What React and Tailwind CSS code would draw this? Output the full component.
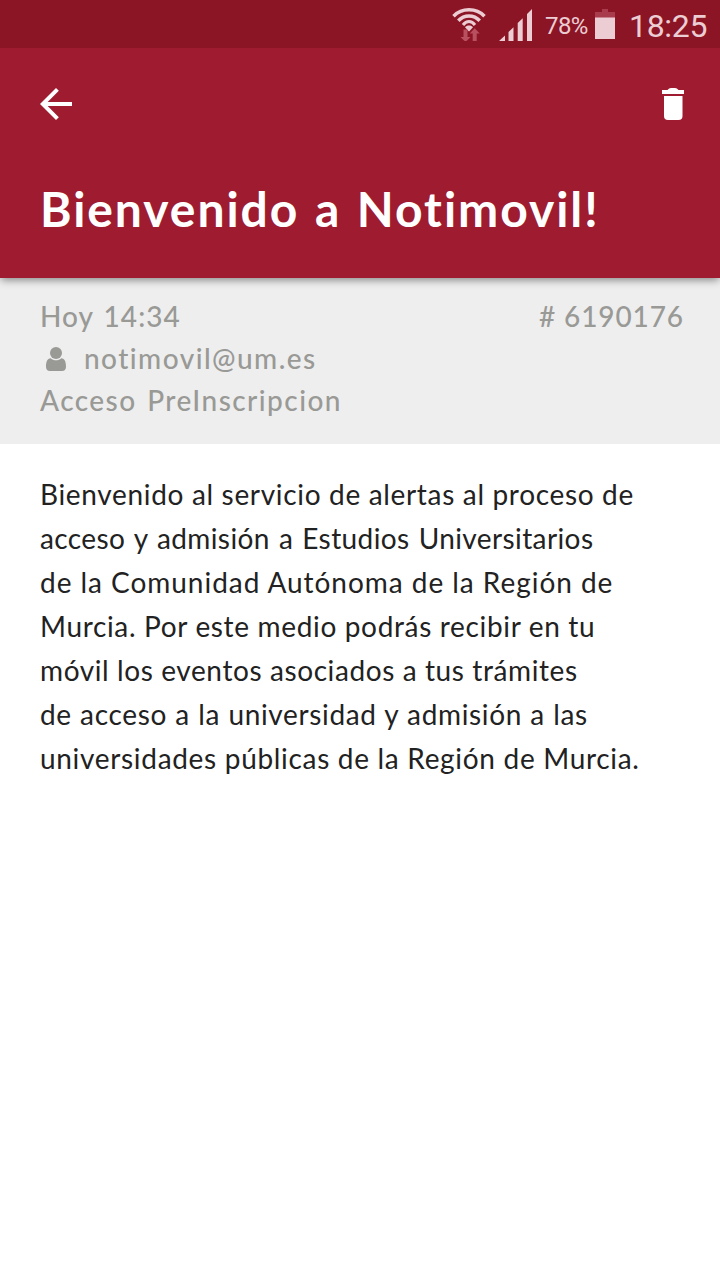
const bodyLines = [
  { text: "Bienvenido al servicio de alertas al proceso de", track: "tracking-[0.67px]" },
  { text: "acceso y admisión a Estudios Universitarios", track: "tracking-[0.4px] [word-spacing:1.5px]" },
  { text: "de la Comunidad Autónoma de la Región de", track: "tracking-[0.96px]" },
  { text: "Murcia. Por este medio podrás recibir en tu", track: "tracking-[0.66px]" },
  { text: "móvil los eventos asociados a tus trámites", track: "tracking-[0.6px]" },
  { text: "de acceso a la universidad y admisión a las", track: "tracking-[0.66px] [word-spacing:0.5px]" },
  { text: "universidades públicas de la Región de Murcia.", track: "tracking-[0.69px]" },
];

function WifiIcon() {
  return (
    <svg className="h-9 w-9 shrink-0" viewBox="0 0 36 36" fill="none">
      <g stroke="#eccdd3" strokeWidth="3.5">
        <path d="M2.500 11.200C10.800 2.700 25.200 2.700 33.500 11.200" />
        <path d="M7.300 15.700C13.200 9.300 22.800 9.300 28.700 15.700" />
        <path d="M12 20C15.500 15.200 20.500 15.200 24 20" strokeWidth="3" />
      </g>
      <path d="M18 20.600c1.700 0 3 .7 4 1.700L18 26.500l-4-4.200c1-1 2.300-1.700 4-1.700z" fill="#eccdd3" />
      <path d="M12.500 24.500h4v7.500h3L14.500 37 9.500 32h3z" fill="#b8505f" />
      <path d="M21.700 36h4v-7.500h3L23.700 23.200 18.700 28.500h3z" fill="#b8505f" />
    </svg>
  );
}

function SignalIcon() {
  return (
    <svg className="h-8 w-[34px] shrink-0" viewBox="0 0 34 32" fill="#eccdd3">
      <path d="M0 32L6 26.500V32zM9.500 23L14.500 18.300V32H9.500zM18.700 14L23.700 9.300V32H18.700zM28 5L33 0V32H28z" />
    </svg>
  );
}

function BatteryIcon() {
  return (
    <svg className="h-[30px] w-5 shrink-0" viewBox="0 0 20 30">
      <path d="M0 3h7V0h6v3h7v6H0z" fill="#a93c4c" />
      <path d="M0 8.500h20V30H0z" fill="#eccdd3" />
    </svg>
  );
}

function BackIcon() {
  return (
    <svg className="h-8 w-8" viewBox="4 4 16 16" fill="#fff">
      <path d="M20 11H7.830l5.590-5.590L12 4l-8 8 8 8 1.410-1.410L7.830 13H20v-2z" />
    </svg>
  );
}

function TrashIcon() {
  return (
    <svg className="h-8 w-[22px]" viewBox="0 0 22 32" fill="#fff">
      <path d="M0 2H5.500Q7 0 9 0H13Q15 0 16.500 2H22V6H0z" />
      <path d="M2 8H20.500V28Q20.500 32 16.500 32H6Q2 32 2 28z" />
    </svg>
  );
}

function UserIcon() {
  return (
    <svg className="h-6 w-5" viewBox="0 0 20 24" fill="currentColor">
      <circle cx="10" cy="6" r="6" />
      <path d="M4.700 11.200C6.200 12.600 8 13.300 10 13.300S13.800 12.600 15.300 11.200C18.800 11.400 20 15 20 19.700C20 22.500 18.500 24 16 24H4C1.500 24 0 22.500 0 19.700C0 15 1.200 11.400 4.700 11.200z" />
    </svg>
  );
}

export default function App() {
  return (
    <div className="flex h-[1280px] w-[720px] flex-col overflow-hidden bg-white font-['Lato',sans-serif]">
      <div className="z-20 flex h-12 shrink-0 items-start justify-end bg-[#8b1525] pr-3 font-['Roboto',sans-serif] text-[#eccdd3]">
        <div className="flex pt-[5px]">
          <WifiIcon />
        </div>
        <div className="ml-3 flex pt-[9px]">
          <SignalIcon />
        </div>
        <span className="ml-3 w-[43px] pt-[10px] text-2xl leading-8 tracking-[-0.6px] whitespace-nowrap">78%</span>
        <div className="ml-[7px] flex pt-[9px]">
          <BatteryIcon />
        </div>
        <span className="ml-[14px] w-[79px] pt-[6px] text-[32px] leading-10 tracking-[-0.3px] whitespace-nowrap">18:25</span>
      </div>

      <header className="z-10 flex h-[230px] shrink-0 flex-col bg-[#9e1b30] pt-10 pr-9 pl-10 text-white shadow-[0_3px_8px_-1px_rgba(0,0,0,0.45)]">
        <div className="flex items-center justify-between">
          <BackIcon />
          <TrashIcon />
        </div>
        <h1 className="mt-[59px] text-5xl leading-[60px] font-bold tracking-[1.95px] [word-spacing:2px] whitespace-nowrap">
          Bienvenido a Notimovil!
        </h1>
      </header>

      <section className="h-[166px] shrink-0 bg-[#eee] pt-[17px] pr-9 pl-10 text-[28px] leading-[42px] font-medium whitespace-nowrap text-[#999996]">
        <div className="flex justify-between">
          <span className="tracking-[1.05px] [word-spacing:2px]">Hoy 14:34</span>
          <span className="tracking-[0.9px]"># 6190176</span>
        </div>
        <div className="flex items-center">
          <div className="mt-0.5 ml-1.5">
            <UserIcon />
          </div>
          <span className="ml-[18px] tracking-[1.45px]">notimovil@um.es</span>
        </div>
        <div className="tracking-[1.45px] [word-spacing:2px]">Acceso PreInscripcion</div>
      </section>

      <main className="pt-7 pl-10 text-[28px] leading-[44px] whitespace-nowrap text-[#222]">
        {bodyLines.map((line) => (
          <p key={line.text} className={line.track}>
            {line.text}
          </p>
        ))}
      </main>
    </div>
  );
}
